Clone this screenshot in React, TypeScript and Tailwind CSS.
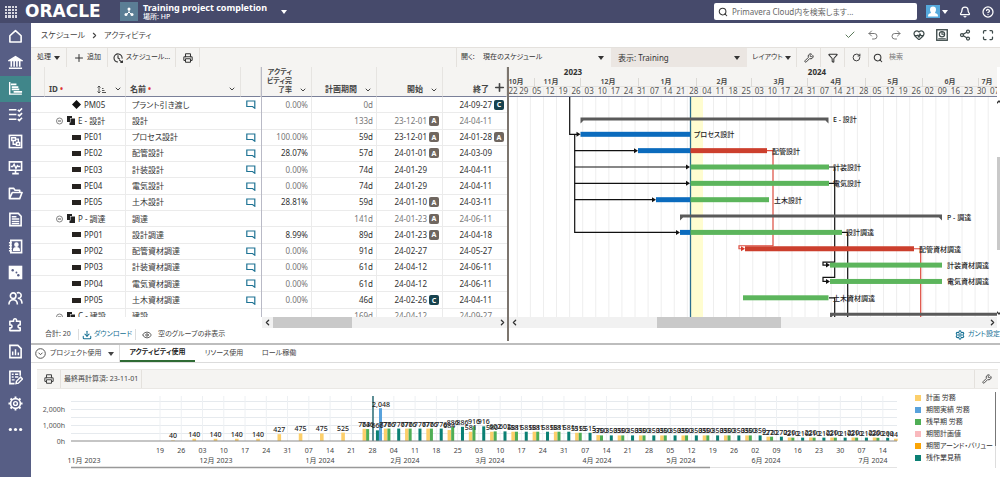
import React from 'react';
import {
  Bell, CircleHelp, Search, Printer, Plus, Check, Undo2, Redo2, Share2, Maximize,
  Filter, RotateCw, Wrench, Download, Eye, Settings, ChevronDown, ChevronUp, ChevronLeft, ChevronRight, HeartPulse,
} from 'lucide-react';

type Row = {
  id: string;
  name: string;
  kind: 'milestone' | 'group' | 'task';
  pct?: string;
  dur: string;
  start?: string;
  startTag?: 'A' | 'C';
  finish: string;
  finishTag?: 'A' | 'C';
};

const rows: Row[] = [
  { id: 'PM05', name: 'プラント引き渡し', kind: 'milestone', pct: '0.00%', dur: '0d', finish: '24-09-27', finishTag: 'C' },
  { id: 'E - 設計', name: '設計', kind: 'group', dur: '133d', start: '23-12-01', startTag: 'A', finish: '24-04-11' },
  { id: 'PE01', name: 'プロセス設計', kind: 'task', pct: '100.00%', dur: '59d', start: '23-12-01', startTag: 'A', finish: '24-01-28', finishTag: 'A' },
  { id: 'PE02', name: '配管設計', kind: 'task', pct: '28.07%', dur: '57d', start: '24-01-01', startTag: 'A', finish: '24-03-09' },
  { id: 'PE03', name: '計装設計', kind: 'task', pct: '0.00%', dur: '74d', start: '24-01-29', finish: '24-04-11' },
  { id: 'PE04', name: '電気設計', kind: 'task', pct: '0.00%', dur: '74d', start: '24-01-29', finish: '24-04-11' },
  { id: 'PE05', name: '土木設計', kind: 'task', pct: '28.81%', dur: '59d', start: '24-01-10', startTag: 'A', finish: '24-03-11' },
  { id: 'P - 調達', name: '調達', kind: 'group', dur: '141d', start: '24-01-23', startTag: 'A', finish: '24-06-11' },
  { id: 'PP01', name: '設計調達', kind: 'task', pct: '8.99%', dur: '89d', start: '24-01-23', startTag: 'A', finish: '24-04-18' },
  { id: 'PP02', name: '配管資材調達', kind: 'task', pct: '0.00%', dur: '91d', start: '24-02-27', finish: '24-05-27' },
  { id: 'PP03', name: '計装資材調達', kind: 'task', pct: '0.00%', dur: '61d', start: '24-04-12', finish: '24-06-11' },
  { id: 'PP04', name: '電気資材調達', kind: 'task', pct: '0.00%', dur: '61d', start: '24-04-12', finish: '24-06-11' },
  { id: 'PP05', name: '土木資材調達', kind: 'task', pct: '0.00%', dur: '46d', start: '24-02-26', startTag: 'C', finish: '24-04-11' },
  { id: 'C - 建設', name: '建設', kind: 'group', dur: '169d', start: '24-04-12', finish: '24-09-27' },
];

function Caret() {
  return (
    <svg width="6" height="4" viewBox="0 0 6 4" className="shrink-0" aria-hidden="true">
      <path d="M0 0h6L3 4z" fill="currentColor" />
    </svg>
  );
}

function Icon({ children, size = 15 }: { children: React.ReactNode; size?: number }) {
  return (
    <svg width={size} height={size} viewBox="0 0 16 16" fill="none" stroke="currentColor" strokeWidth="1.5" aria-hidden="true">
      {children}
    </svg>
  );
}

const navItems: { label: string; icon: React.ReactNode }[] = [
  { label: 'ホーム', icon: <path d="M2 7.2 8 1.8l6 5.4v6.6H2z" strokeLinejoin="round" strokeWidth="1.7" /> },
  { label: 'ポートフォリオ', icon: <><path d="M1.500 5.800 8 1.800l6.500 4z" fill="currentColor" /><path d="M3.500 6.500v6M6.500 6.500v6M9.500 6.500v6M12.500 6.500v6M1 14.200h14" strokeWidth="1.700" /></> },
  { label: 'スケジュール', icon: <><path d="M1.800 1v13h13" /><path d="M3 3.500h6M4 6.500h7M4 9h8M6 11.500h9" strokeWidth="1.800" /></> },
  { label: 'タスク', icon: <path d="M1 3h8M1 8h8M1 13h8M10.500 3l1.500 1.500L15 1.500M10.500 8l1.500 1.500L15 6.500M10.500 13l1.500 1.500 3-3" strokeWidth="1.700" /> },
  { label: 'ワークフロー', icon: <><rect x="1.500" y="1.500" width="13" height="13" strokeWidth="1.700" /><path d="M4 4h4v3H4zM9 9h3.500v3H9zM8 5.500h3V9M5.500 7v4H9" /></> },
  { label: 'モニター', icon: <><path d="M1.500 2h13v9h-13zM8 11v3M4.500 14.500h7" strokeWidth="1.700" /><path d="M3 7h2l1.500-2.500L8.500 9 10 6l1 1h2" /></> },
  { label: 'ファイル', icon: <path d="M1.500 13.500V2.500h4.500L7.500 4.500h5V7M1.500 13.500l3-6.500h10.500l-2.500 6.500z" strokeLinejoin="round" strokeWidth="1.700" /> },
  { label: 'ドキュメント', icon: <><path d="M2 1.500h9l3 3v10H2z" strokeWidth="1.700" /><path d="M4 5h5M4 7.500h8M4 10h8M4 12.300h8" /></> },
  { label: '連絡先', icon: <><path d="M3 1.500h11.500v13H3z" strokeWidth="1.700" /><path d="M1 4h3M1 7h3M1 10h3M1 12.500h3" /><circle cx="9" cy="6" r="1.700" fill="currentColor" /><path d="M6 12c0-3.500 6-3.500 6 0z" fill="currentColor" /></> },
  { label: 'リスク', icon: <><rect x="1.500" y="1.500" width="13" height="13" fill="currentColor" /><g fill="#575e85" stroke="none"><circle cx="5" cy="5.500" r="1.300" /><circle cx="9" cy="8" r="1" /><circle cx="11" cy="11" r="1.300" /></g></> },
  { label: 'リソース', icon: <><circle cx="5.500" cy="5" r="3" strokeWidth="1.700" /><path d="M1 14.500c0-7 9-7 9 0M9.500 2.200a3 3 0 1 1 1 5.500c2.800 0 4.300 2 4.500 5.800" strokeWidth="1.700" /></> },
  { label: 'アプリ', icon: <path d="M2 4.500h4c-1.200-3.500 4.200-3.500 3 0h4v4c-3-1-3 4 0 3v3H2v-3c3 1 3-4 0-3z" strokeLinejoin="round" strokeWidth="1.700" /> },
  { label: 'レポート', icon: <><path d="M2 1.500h8.500L14 5v9.500H2z" strokeWidth="1.700" /><path d="M5 8v4M8 5.500V12M11 9v3" strokeWidth="1.600" /></> },
  { label: 'フォーム', icon: <><path d="M13 6V1.500H2v13h5" strokeWidth="1.700" /><path d="M4 4.500h2M7.500 4.500H11M4 7.500h2M7.500 7.500H11M4 10.500h3" /><path d="m8.500 14.500.5-2.500 4.500-4.500 2 2L11 14z" /></> },
  { label: '設定', icon: <><circle cx="8" cy="8" r="5.200" strokeWidth="1.700" /><circle cx="8" cy="8" r="2" strokeWidth="1.500" /><path d="M8 .5v2.500M8 13v2.500M.5 8H3M13 8h2.500M2.700 2.700l1.800 1.800M11.500 11.500l1.800 1.800M13.300 2.700l-1.800 1.800M4.500 11.500l-1.800 1.800" strokeWidth="2" /></> },
  { label: 'その他', icon: <g fill="currentColor" stroke="none"><circle cx="2.500" cy="8" r="1.700" /><circle cx="8" cy="8" r="1.700" /><circle cx="13.500" cy="8" r="1.700" /></g> },
];

function TopBar() {
  return (
    <header className="flex h-[23px] items-center bg-[#464a6b] text-white">
      <button aria-label="メニュー" className="ml-[5px] grid size-3 grid-cols-4 gap-px">
        {Array.from({ length: 16 }, (_, i) => <span key={i} className="size-full bg-[#d8d8e0]" />)}
      </button>
      <span className="ml-2 w-[78px] font-['DejaVu_Sans',sans-serif] text-[17px] leading-none font-bold">ORACLE</span>
      <span className="ml-[17px] flex h-[19px] w-[18px] items-center justify-center bg-[#5b7e95]">
        <svg width="10" height="10" viewBox="0 0 10 10" aria-hidden="true">
          <path d="M5 2v3M2 8l3-3 3 3" stroke="#fff" fill="none" />
          <circle cx="5" cy="2" r="1.500" fill="#fff" /><circle cx="2" cy="7.500" r="1.500" fill="#fff" /><circle cx="8" cy="7.500" r="1.500" fill="#fff" />
        </svg>
      </span>
      <div className="ml-[5px] w-[138px] whitespace-nowrap">
        <div className="text-[9px] leading-[11px] font-bold">Training project completion</div>
        <div className="text-[7px] leading-[8px] font-medium">場所: HP</div>
      </div>
      <button aria-label="プロジェクトの切替"><Caret /></button>
      <label className="ml-auto flex h-[17px] w-[203px] items-center gap-1 rounded-xs bg-white px-1 text-[#333]">
        <Search size={10} strokeWidth={2.5} className="shrink-0" />
        <input aria-label="検索" placeholder="Primavera Cloud内を検索します..." className="w-full bg-transparent text-[8px] outline-none placeholder:text-[#666]" />
      </label>
      <button aria-label="ユーザー" className="ml-[9px] flex items-center gap-0.5">
        <svg width="14" height="13" viewBox="0 0 14 13" aria-hidden="true">
          <rect width="14" height="13" fill="#55a9dd" />
          <path d="M4 4.500a3 3 0 0 1 6 0c0 2-1 3-1 3.500 2 .5 3 1 3 3.500H2c0-2.500 1-3 3-3.500C5 7.500 4 6.500 4 4.500" fill="#fff" />
        </svg>
        <Caret />
      </button>
      <button aria-label="通知" className="ml-[11px]"><Bell size={12} strokeWidth={2.5} /></button>
      <button aria-label="ヘルプ" className="mr-[6px] ml-[11px]"><CircleHelp size={12} strokeWidth={2.5} /></button>
    </header>
  );
}

function Sidebar() {
  return (
    <nav className="w-[31px] shrink-0 bg-[#575e85] text-white">
      <div className="flex h-[420px] flex-col">
        {navItems.map((n, i) => (
          <button key={n.label} aria-label={n.label} className={'flex flex-1 items-center justify-center ' + (i === 2 ? 'bg-[#40868a]' : '')}>
            <Icon>{n.icon}</Icon>
          </button>
        ))}
      </div>
    </nav>
  );
}

function Breadcrumb() {
  return (
    <div className="flex h-6 items-center pl-[10px] text-[8px] text-[#444]">
      <a href="#schedule">スケジュール</a>
      <ChevronRight size={9} strokeWidth={3} className="mx-[5px]" />
      <span>アクティビティ</span>
      <div className="mr-[6px] ml-auto flex items-center gap-[11px] text-[#3d4a4a]">
        <button aria-label="保存" className="text-[#5b7a5b]"><Check size={12} /></button>
        <button aria-label="元に戻す" className="text-[#777]"><Undo2 size={12} /></button>
        <button aria-label="やり直し" className="text-[#777]"><Redo2 size={12} /></button>
        <button aria-label="状態"><HeartPulse size={12} strokeWidth={2.5} /></button>
        <button aria-label="レポート">
          <Icon size={12}><rect x="1" y="1" width="14" height="14" strokeWidth="1.800" /><circle cx="8" cy="7" r="3.500" strokeWidth="1.600" /><path d="M8 3.500V7h3.500M3 13h10" /></Icon>
        </button>
        <button aria-label="共有"><Share2 size={12} strokeWidth={2.5} /></button>
        <button aria-label="全画面"><Maximize size={12} strokeWidth={2.5} /></button>
      </div>
    </div>
  );
}

const toolBtn = 'flex items-center justify-center border-r border-[#e4e1dd]';

function Toolbar() {
  return (
    <div className="flex h-5 items-stretch border-t border-[#e4e1dd] bg-[#f5f4f2] text-[7px] text-[#333]">
      <button className={toolBtn + ' w-9 gap-[3px]'}>処理 <Caret /></button>
      <button className={toolBtn + ' w-[41px] gap-0.5'}><Plus size={12} />追加</button>
      <button className={toolBtn + ' w-[68px] gap-[3px]'}>
        <Icon size={10}><path d="M8 3.500V8l3 2M14.500 9A6.500 6.500 0 1 0 8 14.500" strokeWidth="1.800" /><path d="m10 11 5 4.500M15 12v3.500h-3.500" strokeWidth="1.800" /></Icon>
        スケジュール...
      </button>
      <button aria-label="印刷" className={toolBtn + ' w-6'}><Printer size={10} strokeWidth={2.5} /></button>
      <div className="ml-auto flex w-[155px] items-center border-l border-[#e4e1dd] pr-[7px] pl-1">
        <label htmlFor="open" className="w-[22px] shrink-0">開く:</label>
        <select id="open" className="min-w-0 flex-1 appearance-none outline-none"><option>現在のスケジュール</option></select>
        <Caret />
      </div>
      <label className="flex w-[136px] items-center bg-[#ebe6e2] pr-[7px] pl-[7px] text-[8px]">
        <span className="shrink-0 pr-0.5">表示:</span>
        <select aria-label="表示" className="min-w-0 flex-1 appearance-none outline-none"><option>Training</option></select>
        <Caret />
      </label>
      <button className={toolBtn + ' w-[50px] gap-0.5'}>レイアウト <Caret /></button>
      <button aria-label="設定" className={toolBtn + ' w-6'}><Wrench size={10} strokeWidth={2.2} /></button>
      <button aria-label="フィルタ" className={toolBtn + ' w-6'}><Filter size={10} strokeWidth={2.5} /></button>
      <button aria-label="更新" className={toolBtn + ' w-6'}><RotateCw size={9} strokeWidth={2.5} /></button>
      <label className="flex w-[131px] items-center gap-[6px] pl-1">
        <Search size={10} strokeWidth={2.5} className="shrink-0" />
        <input aria-label="行の検索" placeholder="検索" className="w-full bg-transparent outline-none placeholder:text-[#777]" />
      </label>
    </div>
  );
}

function Tag({ value }: { value?: 'A' | 'C' }) {
  if (!value) return <span className="w-[10px] shrink-0" />;
  return (
    <span className={'flex size-[10px] shrink-0 items-center justify-center rounded-xs text-[7px] leading-none font-bold text-white ' + (value === 'A' ? 'bg-[#6f665f]' : 'bg-[#17424e]')}>
      {value}
    </span>
  );
}

function RowIcon({ kind }: { kind: Row['kind'] }) {
  if (kind === 'milestone')
    return <svg width="9" height="9" viewBox="0 0 9 9" aria-hidden="true"><path d="M4.500 0 9 4.500 4.500 9 0 4.500z" fill="#111" /></svg>;
  if (kind === 'task')
    return <svg width="9" height="5" viewBox="0 0 9 5" aria-hidden="true"><path d="M0 0h9v5H0z" fill="#26221f" /></svg>;
  return (
    <svg width="20" height="9" viewBox="0 0 20 9" aria-hidden="true">
      <circle cx="4.500" cy="5" r="3" fill="none" stroke="#666" strokeWidth=".8" /><path d="M3 5h3" stroke="#555" />
      <path d="M12 0h5v2h-2v4h-3z" fill="#222" /><path d="M15.500 2.500H20V9h-5.500V6.500h1z" fill="#222" />
    </svg>
  );
}

const th = 'border-r border-b border-r-[#e6e4e1] border-b-[#7a8099] bg-[#f5f4f2] align-bottom p-0 pb-0.5 font-bold text-[#444]';
const td = 'border-r border-b border-[#ebebeb] p-0';

function FrozenTable() {
  return (
    <div className="w-[231px] shrink-0 overflow-hidden border-r border-[#b9bac6]">
      <table className="h-[258px] w-full table-fixed border-separate border-spacing-0 text-[8px] leading-[10px] whitespace-nowrap">
        <colgroup><col className="w-[14px]" /><col className="w-[81px]" /><col className="w-[115px]" /><col /></colgroup>
        <thead>
          <tr className="h-[30px]">
            <th className={th} aria-label="展開" />
            <th className={th}>
              <div className="flex items-center pr-[3px] pl-1">
                ID<span className="ml-0.5 text-[#d33]">•</span>
                <svg width="9" height="9" viewBox="0 0 9 9" className="mr-2 ml-auto" aria-hidden="true"><path d="M2 1v7M.5 2.500 2 1l1.500 1.500M.5 6.500 2 8l1.500-1.500M5 3.500h1.500M5 5.500h2.500M5 7.500h4" fill="none" stroke="#444" strokeWidth=".9" /></svg>
                <ChevronDown size={8} strokeWidth={3} />
              </div>
            </th>
            <th className={th}>
              <div className="flex items-center pr-1 pl-1">名前<span className="ml-0.5 text-[#d33]">•</span><ChevronDown size={8} strokeWidth={3} className="ml-auto" /></div>
            </th>
            <th className={th} aria-label="コメント" />
          </tr>
        </thead>
        <tbody className="text-[#333]">
          {rows.map((r) => (
            <tr key={r.id}>
              <td className="border-b border-[#ebebeb] p-0" />
              <td className={td}>
                <div className={'flex items-center gap-[3px] ' + (r.kind === 'group' ? 'pl-[10px]' : 'pl-[27px]')}><RowIcon kind={r.kind} />{r.id}</div>
              </td>
              <td className="border-b border-[#ebebeb] p-0 pl-[6px]">{r.name}</td>
              <td className="border-b border-[#ebebeb] p-0">
                {r.kind !== 'group' && (
                  <svg width="10" height="9" viewBox="0 0 10 9" className="ml-[5px] block" aria-hidden="true"><path d="M.8 1h8v7.200L6.500 6.500H.8z" fill="none" stroke="#1f7394" strokeWidth="1.200" /></svg>
                )}
              </td>
            </tr>
          ))}
        </tbody>
      </table>
    </div>
  );
}

function HeadCell({ children }: { children: React.ReactNode }) {
  return (
    <th className={th}>
      <div className="flex items-end justify-end gap-[7px] pr-1 text-right">{children}<ChevronDown size={8} strokeWidth={3} className="shrink-0" /></div>
    </th>
  );
}

function DateTable() {
  return (
    <div className="flex w-[245px] shrink-0 flex-col">
      <div className="h-[250px] overflow-hidden">
        <table className="h-[258px] w-full table-fixed border-separate border-spacing-0 text-right text-[8px] leading-[10px] whitespace-nowrap">
          <colgroup><col className="w-[50px]" /><col className="w-[65px]" /><col className="w-[66px]" /><col /></colgroup>
          <thead>
            <tr className="h-[30px]">
              <HeadCell><span className="text-[7px] leading-[9px]">アクティ<br />ビティ完<br />了率</span></HeadCell>
              <HeadCell>計画期間</HeadCell>
              <HeadCell>開始</HeadCell>
              <th className={th}><div className="flex items-end justify-end gap-1">終了<Plus size={13} strokeWidth={3} className="shrink-0" /></div></th>
            </tr>
          </thead>
          <tbody>
            {rows.map((r) => (
              <tr key={r.id} className={r.kind === 'group' ? 'text-[#777]' : 'text-[#333]'}>
                <td className={td + ' pr-[3px] ' + (r.pct === '0.00%' || r.pct === '100.00%' ? 'text-[#777]' : '')}>{r.pct}</td>
                <td className={td + ' pr-[3px] ' + (r.dur === '0d' ? 'text-[#777]' : '')}>{r.dur}</td>
                <td className={td}><div className="flex items-center justify-end gap-0.5 pr-[3px]">{r.start}<Tag value={r.startTag} /></div></td>
                <td className="border-b border-[#ebebeb] p-0"><div className="flex items-center justify-end gap-0.5 pr-[3px]">{r.finish}<Tag value={r.finishTag} /></div></td>
              </tr>
            ))}
          </tbody>
        </table>
      </div>
      <HScroll before="w-[1px]" thumb="w-[79px]" />
    </div>
  );
}

function HScroll({ before, thumb }: { before: string; thumb: string }) {
  return (
    <div className="flex h-[11px] items-stretch bg-[#f1f1f1] text-[#333]">
      <button aria-label="左へ" className="flex w-[10px] items-center justify-center"><ChevronLeft size={9} strokeWidth={3.5} /></button>
      <span className={before} />
      <span className={'bg-[#c9c9c9] ' + thumb} />
      <button aria-label="右へ" className="ml-auto flex w-[10px] items-center justify-center"><ChevronRight size={9} strokeWidth={3.5} /></button>
    </div>
  );
}

const BLUE = '#0b6bbd';
const RED = '#cc3f2d';
const GREEN = '#5cb55c';
const HEAD = 30;
const barY = (r: number) => HEAD + 4.6 + 16.35 * r;

const weeks = ['29', '05', '12', '19', '26', '03', '10', '17', '24', '31', '07', '14', '21', '28', '04', '11', '18', '25', '03', '10', '17', '24', '31', '07', '14', '21', '28', '05', '12', '19', '26', '02', '09', '16', '23', '30', '07'];
const months: [string, number, number][] = [
  ['10月', 7, 25], ['11月', 42, 71], ['12月', 99, 129], ['1月', 157, 187], ['2月', 213, 242], ['3月', 270, 298],
  ['4月', 327, 356], ['5月', 384, 413], ['6月', 441, 469], ['7月', 478, 500],
];
const bars: [number, number, number, string][] = [
  [2, 71.5, 181, BLUE], [3, 129, 181.5, BLUE], [3, 181.5, 258, RED], [4, 181.5, 320, GREEN], [5, 181.5, 320, GREEN],
  [6, 147, 181.5, BLUE], [6, 181.5, 260, GREEN], [8, 171, 181.5, BLUE], [8, 181.5, 333, GREEN], [9, 236, 405, RED],
  [10, 321, 433, GREEN], [11, 321, 433, GREEN], [12, 234, 319.5, GREEN],
];
const summaries: [number, number, number][] = [[1, 71.5, 319.5], [7, 171, 433], [13, 321, 500]];
const barLabels: [number, number, string][] = [
  [1, 324, 'E - 設計'], [2, 185, 'プロセス設計'], [3, 263, '配管設計'], [4, 324, '計装設計'], [5, 324, '電気設計'], [6, 265, '土木設計'],
  [7, 438, 'P - 調達'], [8, 337, '設計調達'], [9, 410, '配管資材調達'], [10, 438, '計装資材調達'], [11, 438, '電気資材調達'], [12, 324, '土木資材調達'],
];
const arrows: [number, number, string][] = [
  [2, 71.5, '#111'], [3, 129, '#111'], [4, 181, '#111'], [5, 181, '#111'], [6, 147, '#111'], [8, 171, '#111'],
  [9, 236, '#d8382a'], [10, 321, '#111'], [11, 321, '#111'],
];

function Gantt() {
  return (
    <div className="flex min-w-0 flex-1 flex-col">
      <div className="h-[250px] overflow-hidden">
        <svg width="488" height="250" className="block" role="img" aria-label="ガント・チャート">
          <rect width="488" height={HEAD} fill="#f5f4f2" />
          {weeks.map((_, k) => <path key={k} d={`M${8.3 + 13.08 * k} 20V250`} stroke="#eeeeee" />)}
          <rect x="182" y={HEAD} width="12" height="220" fill="#fffdd0" />
          <path d="M0 19.500H488" stroke="#e4e2df" />
          {months.map(([m, c, end]) => (
            <g key={m}>
              <text x={c} y="17" textAnchor="middle" fontSize="7" fontWeight="600" fill="#444">{m}</text>
              <path d={`M${end}.5 11v9`} stroke="#dcdad6" />
            </g>
          ))}
          <g fontSize="8" fontWeight="700" fill="#333" textAnchor="middle"><text x="64" y="8">2023</text><text x="308" y="8">2024</text></g>
          <g fontSize="8" fill="#555" textAnchor="middle">
            <text x="4" y="27">22</text>
            {weeks.map((w, k) => <text key={k} x={14.8 + 13.08 * k} y="27">{w}</text>)}
          </g>
          <path d="M0 29.500H488" stroke="#7a8099" />
          <path d="M181.500 30V250" stroke="#2b6f8f" strokeWidth="1.300" />
          <g fill="none" stroke="#111" strokeWidth="1.200">
            <path d={`M60.700 ${HEAD}V${barY(2)}H68M65.700 ${barY(2)}V${barY(8)}H168`} />
            {[3, 4, 5, 6].map((r) => <path key={r} d={`M65.700 ${barY(r)}H${[125, 178, 178, 144][r - 3]}`} />)}
            <path d={`M320 ${barY(4)}h5.700V${barY(10) - 3}H314v3h4M320 ${barY(5)}h5.700M325.700 ${barY(10)}V${barY(11) - 4}H314v4h4`} />
            <path d={`M320 ${barY(12)}h5.700V250M333 ${barY(8)}h5.700V250`} />
          </g>
          <path d={`M258 ${barY(3)}h6V${barY(9) - 3}H230v3h3M405 ${barY(9)}h6.700V250`} fill="none" stroke="#dd4b3e" strokeWidth="1.200" />
          {bars.map(([r, a, b, c], i) => <rect key={i} x={a} y={barY(r) - 2.5} width={b - a} height="5" fill={c} />)}
          {summaries.map(([r, a, b]) => {
            const y = barY(r) - (r === 1 ? 0.5 : 1.5);
            return <path key={r} d={`M${a} ${y}H${b}v6l-3-3H${a + 3}l-3 3z`} fill="#5a5a5a" />;
          })}
          {arrows.map(([r, x, c], i) => <path key={i} d={`M${x} ${barY(r)}l-4-2.500v5z`} fill={c} />)}
          {barLabels.map(([r, x, t]) => <text key={t} x={x} y={barY(r) + (r === 1 || r === 7 ? 4 : 3)} fontSize="7" fontWeight="500" fill="#222">{t}</text>)}
        </svg>
      </div>
      <HScroll before="w-[138px]" thumb="w-[124px]" />
    </div>
  );
}

const Y = (v: number) => 52 - v * 0.016;
const W = (i: number) => 123 + 21.26 * i;
type Use = [number, number?, number?];
const usage: Use[] = [
  [40], [140], [140], [140], [140], [427], [475], [475], [525], [763, 746, 666], [776, 776, 776], [776, 776, 776], [776, 776, 776],
  [684, 886, 886], [581, 916, 916], [580, 602, 602], [581, 581, 581], [581, 581, 581], [581, 581, 581], [515, 515, 515],
  [370, 350, 350], [350, 350, 350], [350, 350, 350], [350, 350, 350], [350, 350, 350], [350, 350, 350], [350, 350, 350], [350, 350, 350],
  [272, 270, 270], [220, 210, 210], [220, 210, 210], [220, 210, 210], [220, 210, 210], [220, 200, 200], [144],
];
const ticks = ['19', '26', '03', '10', '17', '24', '31', '07', '14', '21', '28', '04', '11', '18', '25', '03', '10', '17', '24', '31', '07', '14', '21', '28', '05', '12', '19', '26', '02', '09', '16', '23', '30', '07', '14'];
const chartMonths: [string, number][] = [
  ['11月 2023', 47], ['12月 2023', 179], ['1月 2024', 283], ['2月 2024', 368], ['3月 2024', 453], ['4月 2024', 560], ['5月 2024', 644], ['6月 2024', 729], ['7月 2024', 836],
];
const slots: [number, number, string][] = [[11.2, 3.6, '#fccf6b'], [14.8, 3, '#4fae55'], [24.6, 3, '#0b8074']];

function UsageChart() {
  return (
    <svg width="861" height="86" className="block shrink-0" role="img" aria-label="アクティビティ使用">
      {[500, 1000, 1500, 2000, 2500].map((v) => <path key={v} d={`M34 ${Math.round(Y(v)) + 0.5}H860`} stroke="#e6eaee" />)}
      {ticks.map((_, i) => <path key={i} d={`M${W(i)} 7V52`} stroke="#edf0f3" />)}
      <g fontSize="7" fill="#555" textAnchor="end"><text x="28" y="23">2,000h</text><text x="28" y="39">1,000h</text><text x="28" y="55">0h</text></g>
      {usage.map((u, i) => slots.map(([dx, w, c], s) => u[s] !== undefined && W(i) + dx < 858 && (
        <rect key={`${i}-${s}`} x={W(i) + dx} y={Y(u[s] as number)} width={w} height={(u[s] as number) * 0.016} fill={c} />
      )))}
      <rect x="342" y={Y(2048)} width="3" height="32.700" fill="#58a2dc" />
      <path d="M336 7V52" stroke="#2a6b74" strokeWidth="1.500" />
      <g fontSize="7" fontWeight="500" fill="#222" textAnchor="middle">
        {usage.map((u, i) => slots.map(([dx, w], s) => u[s] !== undefined && (
          <text key={`${i}-${s}`} x={Math.min(W(i) + dx + w / 2, 855)} y={Y(u[s] as number) - 2}>{u[s]}</text>
        )))}
        <text x="344" y="18">2,048</text>
      </g>
      <path d="M34 52H860" stroke="#8c8c8c" strokeWidth="1.200" />
      <g fontSize="7" fill="#444" textAnchor="middle">
        {ticks.map((t, i) => <text key={i} x={W(i)} y="64">{t}</text>)}
        {chartMonths.map(([m, x]) => <text key={m} x={x} y="74">{m}</text>)}
      </g>
      <path d="M34 78.500H860" stroke="#e3e3e3" />
      <path d="M34 78.500H673" stroke="#999" strokeWidth="1.500" />
    </svg>
  );
}

const legend: [string, string][] = [
  ['計画 労務', 'bg-[#fccf6b]'], ['期間実績 労務', 'bg-[#58a2dc]'], ['残早期 労務', 'bg-[#4fae55]'],
  ['期間計画値', 'bg-[#f9b9bd]'], ['期間アーンド・バリュー', 'bg-[#fba506]'], ['残作業見積', 'bg-[#0b8074]'],
];

function UsagePanel() {
  return (
    <section className="border-t-2 border-[#bdbdbd]">
      <div className="flex h-[18px] items-stretch border-b border-[#dcdcdc] text-[7px] text-[#444]">
        <button className="flex w-[89px] items-center border-r border-[#dcdcdc] pl-1">
          <svg width="11" height="11" viewBox="0 0 11 11" className="mr-1 shrink-0" aria-hidden="true"><circle cx="5.500" cy="5.500" r="4.800" fill="none" stroke="#555" /><path d="m3.500 4.700 2 2 2-2" fill="none" stroke="#555" /></svg>
          <span className="whitespace-nowrap">プロジェクト使用</span>
          <span className="mr-[5px] ml-auto"><Caret /></span>
        </button>
        <div role="tablist" className="flex">
          <button role="tab" aria-selected="true" className="w-[75px] border-b-2 border-[#2f6b34] font-bold whitespace-nowrap text-[#222]">アクティビティ使用</button>
          <button role="tab" aria-selected="false" className="w-[58px] whitespace-nowrap">リソース使用</button>
          <button role="tab" aria-selected="false" className="w-[52px] whitespace-nowrap">ロール稼働</button>
        </div>
      </div>
      <div className="mt-[6px] mr-0.5 ml-[6px] flex h-5 items-stretch border-y border-[#eae8e5] bg-[#f5f4f2] text-[7px] text-[#444]">
        <button aria-label="印刷" className={toolBtn + ' w-6'}><Printer size={10} strokeWidth={2.5} /></button>
        <span className="flex items-center border-r border-[#e4e1dd] px-[3px]">最終再計算済: 23-11-01</span>
        <button aria-label="設定" className="ml-auto flex w-6 items-center justify-center border-l border-[#e4e1dd]"><Wrench size={10} strokeWidth={2.2} /></button>
      </div>
      <div className="flex pl-[6px]">
        <UsageChart />
        <ul className="ml-auto w-[80px] pt-[3px] text-[7px] leading-[12px] whitespace-nowrap text-[#333]">
          {legend.map(([t, c]) => (
            <li key={t} className="flex items-center gap-[5px]"><span className={'size-[6px] shrink-0 ' + c} />{t}</li>
          ))}
        </ul>
        <div className="mt-[3px] mr-1 h-[76px] w-px bg-[#ddd]"><div className="h-[54px] bg-[#777]" /></div>
      </div>
    </section>
  );
}

export default function App() {
  return (
    <div className="flex min-h-screen flex-col overflow-hidden bg-white font-['Noto_Sans','Noto_Sans_CJK_JP',sans-serif] [font-feature-settings:'palt']">
      <TopBar />
      <div className="flex flex-1">
        <Sidebar />
        <main className="min-w-0 flex-1">
          <Breadcrumb />
          <Toolbar />
          <div className="flex h-[276px]">
            <div className="flex shrink-0 flex-col">
              <div className="flex h-[261px] overflow-hidden">
                <div className="h-[250px] overflow-hidden"><FrozenTable /></div>
                <DateTable />
              </div>
              <div className="flex flex-1 items-center pb-0.5 text-[7px] text-[#444]">
                <span className="w-12 border-r border-[#ddd] pl-[14px] whitespace-nowrap">合計: 20</span>
                <a href="#download" className="flex w-[57px] items-center justify-center gap-0.5 border-r border-[#ddd] text-[#146f93]"><Download size={10} strokeWidth={2.5} />ダウンロード</a>
                <button className="ml-[6px] flex items-center gap-[6px]"><Eye size={10} />空のグループの非表示</button>
              </div>
            </div>
            <div className="mb-[2px] w-0.5 shrink-0 bg-[#7c756e]" />
            <div className="flex min-w-0 flex-1 flex-col">
              <div className="flex">
                <Gantt />
                <div className="flex w-[3px] shrink-0 flex-col items-center overflow-hidden pt-[31px] pb-[11px] text-[#333]">
                  <ChevronUp size={8} strokeWidth={4} className="shrink-0" />
                  <span className="mt-[51px] h-[93px] w-full bg-[#c9c9c9]" />
                  <ChevronDown size={8} strokeWidth={4} className="mt-auto shrink-0" />
                </div>
              </div>
              <a href="#gantt" className="ml-auto flex flex-1 items-center gap-[3px] pb-0.5 text-[7px] whitespace-nowrap text-[#146f93]"><Settings size={10} strokeWidth={2.5} />ガント設定</a>
            </div>
          </div>
          <UsagePanel />
        </main>
      </div>
    </div>
  );
}
